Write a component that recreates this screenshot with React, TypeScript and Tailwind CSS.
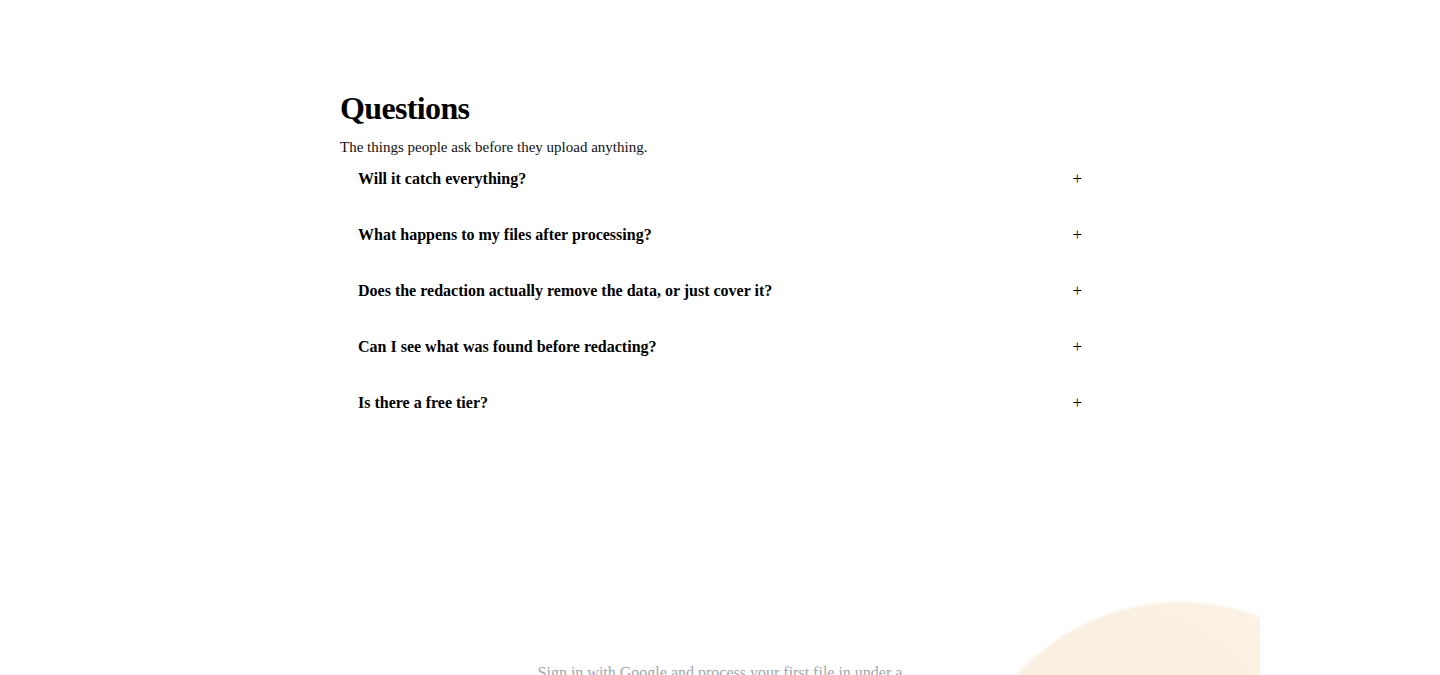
import React from 'react';

const faqs = [
  'Will it catch everything?',
  'What happens to my files after processing?',
  'Does the redaction actually remove the data, or just cover it?',
  'Can I see what was found before redacting?',
  'Is there a free tier?',
];

const App: React.FC = () => {
  return (
    <div className="min-h-screen bg-white text-black font-['Liberation_Serif',serif]">
      <section className="w-[760px] mx-auto pt-[88px]">
        <h2 className="text-[32px] leading-10 font-bold tracking-[-0.02em]">Questions</h2>
        <p className="mt-[9px] text-[15px] leading-5 text-[#111]">The things people ask before they upload anything.</p>
        <div className="mt-1 flex flex-col gap-5">
          {faqs.map((q) => (
            <button
              key={q}
              className="flex items-center justify-between px-[18px] py-2 text-left text-base leading-5 font-bold"
            >
              <span>{q}</span>
              <span className="font-normal text-[17px] leading-5">+</span>
            </button>
          ))}
        </div>
      </section>

      <section className="relative mt-[160px] w-[1080px] mx-auto h-[300px] overflow-hidden">
        <div className="absolute left-[780px] top-[21px] w-[440px] h-[440px] rounded-full bg-[radial-gradient(circle_at_35%_40%,#f9eedc_0%,#fbf1e3_50%,#fcf5ec_75%,#fefbf7_100%)] blur-[1px]" />
        <div className="relative pt-[80px] mx-auto w-[400px] text-center">
          <p className="text-base leading-6 text-[#a3a6ad]">
            Sign in with Google and process your first file in under a minute. No credit card needed.
          </p>
        </div>
      </section>
    </div>
  );
};

export default App;
